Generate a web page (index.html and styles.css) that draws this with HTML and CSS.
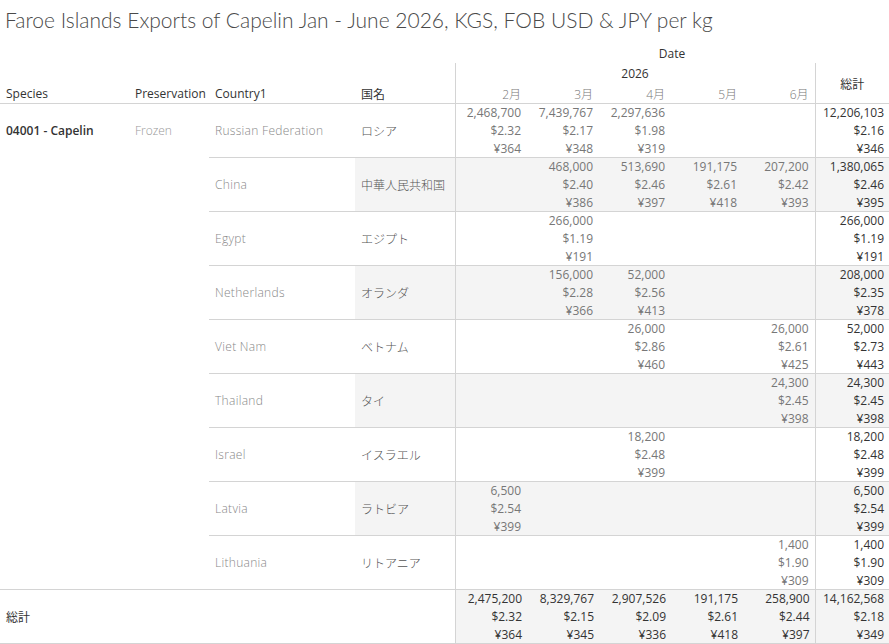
FILE: index.html
```html
<!DOCTYPE html>
<html lang="ja">
<head>
<meta charset="utf-8">
<title>Faroe Islands Exports of Capelin</title>
<link rel="stylesheet" href="styles.css">
</head>
<body>
<h1 class="title">Faroe Islands Exports of Capelin Jan - June 2026, KGS, FOB USD &amp; JPY per kg</h1>
<table class="xtab">
  <colgroup>
    <col class="c-species"><col class="c-pres"><col class="c-country"><col class="c-jp">
    <col class="c-m"><col class="c-m"><col class="c-m"><col class="c-m"><col class="c-m">
    <col class="c-total">
  </colgroup>
  <thead>
    <tr class="h1">
      <th colspan="4"></th>
      <th colspan="6" class="hc">Date</th>
    </tr>
    <tr class="h2">
      <th colspan="4"></th>
      <th colspan="5" class="hc vl">2026</th>
      <th rowspan="2" class="hc vl cjk hb tot-h">総計</th>
    </tr>
    <tr class="h3">
      <th class="hl hb">Species</th>
      <th class="hl hb pres-h">Preservation</th>
      <th class="hl hb">Country1</th>
      <th class="hl hb cjk">国名</th>
      <th class="hm hb vl">2<span class="cjk">月</span></th>
      <th class="hm hb">3<span class="cjk">月</span></th>
      <th class="hm hb">4<span class="cjk">月</span></th>
      <th class="hm hb">5<span class="cjk">月</span></th>
      <th class="hm hb">6<span class="cjk">月</span></th>
    </tr>
  </thead>
  <tbody>
    <tr>
      <td rowspan="9" class="species">04001 - Capelin</td>
      <td rowspan="9" class="pres">Frozen</td>
      <td class="country">Russian Federation</td>
      <td class="jp">ロシア</td>
      <td class="v vl">2,468,700<br>$2.32<br>¥364</td>
      <td class="v">7,439,767<br>$2.17<br>¥348</td>
      <td class="v">2,297,636<br>$1.98<br>¥319</td>
      <td class="v"></td>
      <td class="v"></td>
      <td class="t vl">12,206,103<br>$2.16<br>¥346</td>
    </tr>
    <tr class="band">
      <td class="country">China</td>
      <td class="jp">中華人民共和国</td>
      <td class="v vl"></td>
      <td class="v">468,000<br>$2.40<br>¥386</td>
      <td class="v">513,690<br>$2.46<br>¥397</td>
      <td class="v">191,175<br>$2.61<br>¥418</td>
      <td class="v">207,200<br>$2.42<br>¥393</td>
      <td class="t vl">1,380,065<br>$2.46<br>¥395</td>
    </tr>
    <tr>
      <td class="country">Egypt</td>
      <td class="jp">エジプト</td>
      <td class="v vl"></td>
      <td class="v">266,000<br>$1.19<br>¥191</td>
      <td class="v"></td>
      <td class="v"></td>
      <td class="v"></td>
      <td class="t vl">266,000<br>$1.19<br>¥191</td>
    </tr>
    <tr class="band">
      <td class="country">Netherlands</td>
      <td class="jp">オランダ</td>
      <td class="v vl"></td>
      <td class="v">156,000<br>$2.28<br>¥366</td>
      <td class="v">52,000<br>$2.56<br>¥413</td>
      <td class="v"></td>
      <td class="v"></td>
      <td class="t vl">208,000<br>$2.35<br>¥378</td>
    </tr>
    <tr>
      <td class="country">Viet Nam</td>
      <td class="jp">ベトナム</td>
      <td class="v vl"></td>
      <td class="v"></td>
      <td class="v">26,000<br>$2.86<br>¥460</td>
      <td class="v"></td>
      <td class="v">26,000<br>$2.61<br>¥425</td>
      <td class="t vl">52,000<br>$2.73<br>¥443</td>
    </tr>
    <tr class="band">
      <td class="country">Thailand</td>
      <td class="jp">タイ</td>
      <td class="v vl"></td>
      <td class="v"></td>
      <td class="v"></td>
      <td class="v"></td>
      <td class="v">24,300<br>$2.45<br>¥398</td>
      <td class="t vl">24,300<br>$2.45<br>¥398</td>
    </tr>
    <tr>
      <td class="country">Israel</td>
      <td class="jp">イスラエル</td>
      <td class="v vl"></td>
      <td class="v"></td>
      <td class="v">18,200<br>$2.48<br>¥399</td>
      <td class="v"></td>
      <td class="v"></td>
      <td class="t vl">18,200<br>$2.48<br>¥399</td>
    </tr>
    <tr class="band">
      <td class="country">Latvia</td>
      <td class="jp">ラトビア</td>
      <td class="v vl">6,500<br>$2.54<br>¥399</td>
      <td class="v"></td>
      <td class="v"></td>
      <td class="v"></td>
      <td class="v"></td>
      <td class="t vl">6,500<br>$2.54<br>¥399</td>
    </tr>
    <tr>
      <td class="country">Lithuania</td>
      <td class="jp">リトアニア</td>
      <td class="v vl"></td>
      <td class="v"></td>
      <td class="v"></td>
      <td class="v"></td>
      <td class="v">1,400<br>$1.90<br>¥309</td>
      <td class="t vl">1,400<br>$1.90<br>¥309</td>
    </tr>
    <tr class="grand">
      <td colspan="4" class="glabel">総計</td>
      <td class="t vl">2,475,200<br>$2.32<br>¥364</td>
      <td class="t">8,329,767<br>$2.15<br>¥345</td>
      <td class="t">2,907,526<br>$2.09<br>¥336</td>
      <td class="t">191,175<br>$2.61<br>¥418</td>
      <td class="t">258,900<br>$2.44<br>¥397</td>
      <td class="t vl">14,162,568<br>$2.18<br>¥349</td>
    </tr>
  </tbody>
</table>
</body>
</html>
```
FILE: styles.css
```css
html, body {
  margin: 0;
  padding: 0;
  background: #ffffff;
}
body {
  font-family: "Open Sans", sans-serif;
  color: #333333;
  width: 889px;
  overflow: hidden;
}
.cjk {
  font-family: "Noto Sans CJK JP", sans-serif;
}
.title {
  margin: 0;
  padding: 6px 0 0 5px;
  height: 37px;
  box-sizing: border-box;
  font-family: "Lato", sans-serif;
  font-weight: 300;
  font-size: 21px;
  line-height: 28px;
  color: #4a4a4a;
  white-space: nowrap;
}
.xtab {
  border-collapse: collapse;
  table-layout: fixed;
  width: 889px;
  font-size: 12px;
}
.c-species { width: 131px; }
.c-pres { width: 78px; }
.c-country { width: 146px; }
.c-jp { width: 100px; }
.c-m { width: 72px; }
.c-total { width: 74px; }

th, td {
  padding: 0;
  border: 0;
  font-weight: normal;
  white-space: nowrap;
  box-sizing: border-box;
}
thead th { line-height: 18px; vertical-align: top; }
thead tr.h1 th { height: 26px; padding-top: 8px; }
thead tr.h2 th { height: 20px; padding-top: 2px; }
thead tr.h3 th { height: 21px; padding-top: 2px; }
thead th.tot-h { vertical-align: middle; padding-top: 0; padding-bottom: 1px; }
thead th.hb { box-shadow: inset 0 -1px 0 #d4d4d4; }
thead th.hc { text-align: center; color: #333; }
thead th.hl { text-align: left; padding-left: 6px; color: #333; }
thead th.pres-h { padding-left: 4px; }
thead th.hm { text-align: right; padding-right: 6px; color: #777; font-weight: 300; }
.vl { border-left: 1px solid #d4d4d4; }

tbody td {
  height: 54px;
  line-height: 18px;
  vertical-align: middle;
  box-shadow: inset 0 -1px 0 #d4d4d4;
}
td.species {
  vertical-align: top;
  padding-top: 18px;
  text-align: left;
  padding-left: 6px;
  color: #333;
  font-weight: 600;
}
td.pres {
  vertical-align: top;
  padding-top: 18px;
  text-align: left;
  padding-left: 4px;
  color: #999;
  font-weight: 300;
}
td.country {
  padding-left: 6px;
  color: #888;
  font-weight: 300;
  letter-spacing: 0.3px;
}
td.jp {
  padding-left: 6px;
  color: #555;
  font-weight: 300;
  font-family: "Noto Sans CJK JP", sans-serif;
  font-size: 12px;
}
td.v {
  text-align: right;
  padding-right: 6px;
  color: #777;
  font-weight: 400;
}
td.t {
  text-align: right;
  padding-right: 5px;
  color: #333;
  font-weight: 400;
}
tr.band td.jp,
tr.band td.v,
tr.band td.t { background-color: #f4f4f4; }
tr.grand td.t { background-color: #f4f4f4; }
td.glabel {
  padding-left: 6px;
  color: #333;
  font-family: "Noto Sans CJK JP", sans-serif;
  font-size: 12px;
}
```
